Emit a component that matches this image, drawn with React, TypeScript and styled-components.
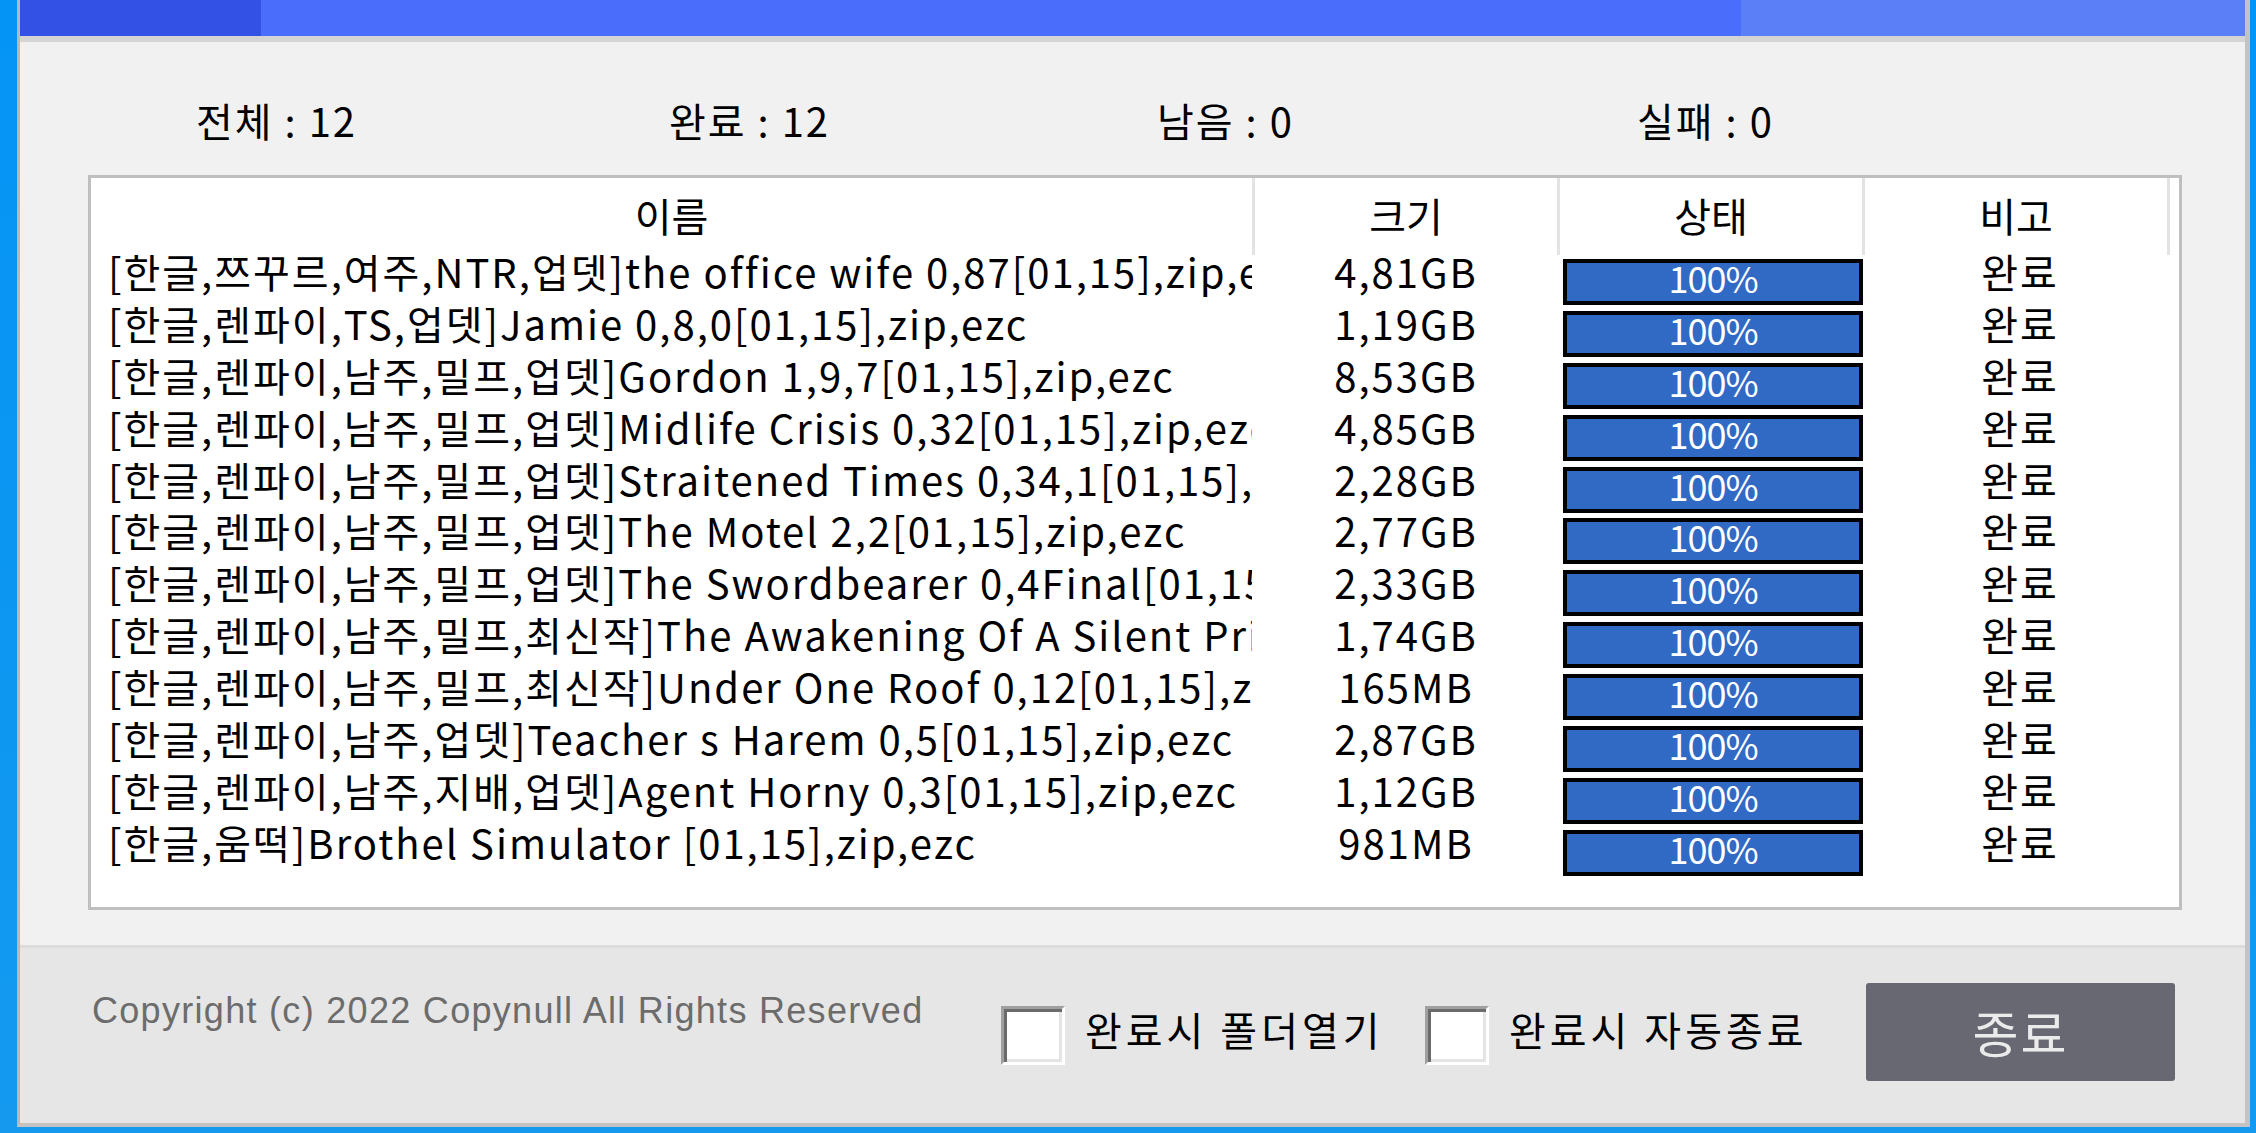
import React from 'react';
import styled, { createGlobalStyle } from 'styled-components';

const KR = `"Noto Sans CJK KR", "Noto Sans", sans-serif`;

const GlobalStyle = createGlobalStyle`
  html, body {
    margin: 0;
    padding: 0;
    background: #0a94f2;
    overflow: hidden;
  }
  * {
    box-sizing: border-box;
  }
`;

const Desktop = styled.div`
  width: 2256px;
  height: 1133px;
  padding: 0 6px 6px 17px;
  background: linear-gradient(180deg, #0494f5 0%, #1499ef 100%);
  display: flex;
`;

const Window = styled.div`
  flex: 1;
  display: flex;
  flex-direction: column;
  border-left: 3px solid #b9b9b9;
  border-right: 5px solid #c3c3c3;
  border-bottom: 4px solid #c3c3c3;
  background: #f1f1f1;
`;

const TitleBar = styled.div`
  height: 36px;
  display: flex;
`;

const TitleSeg = styled.div<{ $color: string; $width?: number }>`
  background: ${(p) => p.$color};
  ${(p) => (p.$width ? `width: ${p.$width}px;` : 'flex: 1;')}
`;

const TitleEdge = styled.div`
  height: 6px;
  background: #d4d4d4;
`;

const Content = styled.div`
  height: 903px;
  padding-top: 58px;
  font-family: ${KR};
  color: #000;
`;

const Stats = styled.div`
  display: grid;
  grid-template-columns: 473px 488px 480px auto;
  padding-left: 176px;
  font-size: 40px;
  line-height: 40px;
  letter-spacing: 2px;
`;

const Table = styled.div`
  margin: 35px 0 0 68px;
  width: 2094px;
  height: 735px;
  border: 3px solid #bfbfbf;
  background: #fff;
  font-size: 40px;
`;

const cols = '1164px 305px 305px 305px 1fr';

const HeaderRow = styled.div`
  display: grid;
  grid-template-columns: ${cols};
  height: 77px;
`;

const HeadCell = styled.div<{ $last?: boolean }>`
  display: flex;
  align-items: center;
  justify-content: center;
  padding-bottom: 4px;
  line-height: 40px;
  border-right: ${(p) => (p.$last ? 'none' : '3px solid #e3e3e3')};
`;

const Row = styled.div`
  display: grid;
  grid-template-columns: ${cols};
  height: 51.9px;
`;

const NameCell = styled.div`
  padding-left: 17px;
  margin-right: 3px;
  overflow: hidden;
  white-space: nowrap;
  line-height: 32px;
  letter-spacing: 2px;
`;

const TextCell = styled.div<{ $shift?: number }>`
  padding: 0 3px 0 ${(p) => p.$shift ?? 0}px;
  text-align: center;
  white-space: nowrap;
  line-height: 32px;
  letter-spacing: 2px;
`;

const StatusCell = styled.div`
  padding: 4px 0 0 3px;
`;

const Bar = styled.div`
  width: 300px;
  height: 46px;
  border: 4px solid #000;
  background: #316ac5;
  color: #fff;
  font-size: 36px;
  line-height: 28px;
  letter-spacing: -1px;
  text-align: center;
`;

const Footer = styled.div`
  flex: 1;
  display: flex;
  align-items: flex-start;
  padding-left: 72px;
  border-top: 3px solid #dcdcdc;
  background: #e6e6e6;
  font-family: ${KR};
`;

const Copyright = styled.div`
  width: 909px;
  margin-top: 43px;
  font-family: "Liberation Sans", Arial, sans-serif;
  font-size: 36px;
  line-height: 40px;
  letter-spacing: 1.3px;
  color: #6c6c6c;
  white-space: nowrap;
`;

const CheckOption = styled.label<{ $width: number }>`
  width: ${(p) => p.$width}px;
  display: flex;
  align-items: flex-start;
  gap: 20px;
`;

const CheckBox = styled.span`
  width: 64px;
  height: 59px;
  margin-top: 58px;
  background: #fff;
  border: 3px solid;
  border-color: #a0a0a0 #ffffff #ffffff #a0a0a0;
  box-shadow: inset 3px 3px 0 #6b6b6b, inset -3px -3px 0 #e4e4e4;
`;

const CheckLabel = styled.span`
  margin-top: 61px;
  font-size: 40px;
  line-height: 40px;
  letter-spacing: 4px;
  color: #000;
  white-space: nowrap;
`;

const CloseButton = styled.button`
  margin-top: 35px;
  width: 309px;
  height: 98px;
  border: none;
  border-radius: 3px;
  background: #686873;
  color: #ebebeb;
  font-family: ${KR};
  font-size: 50px;
  letter-spacing: 2px;
  display: flex;
  align-items: center;
  justify-content: center;
  padding: 0 0 2px;
`;

const files: [string, string][] = [
  ['[한글,쯔꾸르,여주,NTR,업뎃]the office wife 0,87[01,15],zip,ezc', '4,81GB'],
  ['[한글,렌파이,TS,업뎃]Jamie 0,8,0[01,15],zip,ezc', '1,19GB'],
  ['[한글,렌파이,남주,밀프,업뎃]Gordon 1,9,7[01,15],zip,ezc', '8,53GB'],
  ['[한글,렌파이,남주,밀프,업뎃]Midlife Crisis 0,32[01,15],zip,ezc', '4,85GB'],
  ['[한글,렌파이,남주,밀프,업뎃]Straitened Times 0,34,1[01,15],zip,ezc', '2,28GB'],
  ['[한글,렌파이,남주,밀프,업뎃]The Motel 2,2[01,15],zip,ezc', '2,77GB'],
  ['[한글,렌파이,남주,밀프,업뎃]The Swordbearer 0,4Final[01,15],zip,ezc', '2,33GB'],
  ['[한글,렌파이,남주,밀프,최신작]The Awakening Of A Silent Prince[01,15],zip,ezc', '1,74GB'],
  ['[한글,렌파이,남주,밀프,최신작]Under One Roof 0,12[01,15],zip,ezc', '165MB'],
  ['[한글,렌파이,남주,업뎃]Teacher s Harem 0,5[01,15],zip,ezc', '2,87GB'],
  ['[한글,렌파이,남주,지배,업뎃]Agent Horny 0,3[01,15],zip,ezc', '1,12GB'],
  ['[한글,움떡]Brothel Simulator [01,15],zip,ezc', '981MB'],
];

export default function App() {
  return (
    <Desktop>
      <GlobalStyle />
      <Window>
        <TitleBar>
          <TitleSeg $color="#3451e6" $width={241} />
          <TitleSeg $color="#4a6dfb" $width={1480} />
          <TitleSeg $color="#5b7ff6" />
        </TitleBar>
        <TitleEdge />
        <Content>
          <Stats>
            <span>전체 : 12</span>
            <span>완료 : 12</span>
            <span>남음 : 0</span>
            <span>실패 : 0</span>
          </Stats>
          <Table>
            <HeaderRow>
              <HeadCell>이름</HeadCell>
              <HeadCell>크기</HeadCell>
              <HeadCell>상태</HeadCell>
              <HeadCell>비고</HeadCell>
              <HeadCell $last />
            </HeaderRow>
            {files.map(([name, size]) => (
              <Row key={name}>
                <NameCell>{name}</NameCell>
                <TextCell>{size}</TextCell>
                <StatusCell>
                  <Bar>100%</Bar>
                </StatusCell>
                <TextCell $shift={8}>완료</TextCell>
              </Row>
            ))}
          </Table>
        </Content>
        <Footer>
          <Copyright>Copyright (c) 2022 Copynull All Rights Reserved</Copyright>
          <CheckOption $width={424}>
            <CheckBox />
            <CheckLabel>완료시 폴더열기</CheckLabel>
          </CheckOption>
          <CheckOption $width={441}>
            <CheckBox />
            <CheckLabel>완료시 자동종료</CheckLabel>
          </CheckOption>
          <CloseButton>종료</CloseButton>
        </Footer>
      </Window>
    </Desktop>
  );
}
